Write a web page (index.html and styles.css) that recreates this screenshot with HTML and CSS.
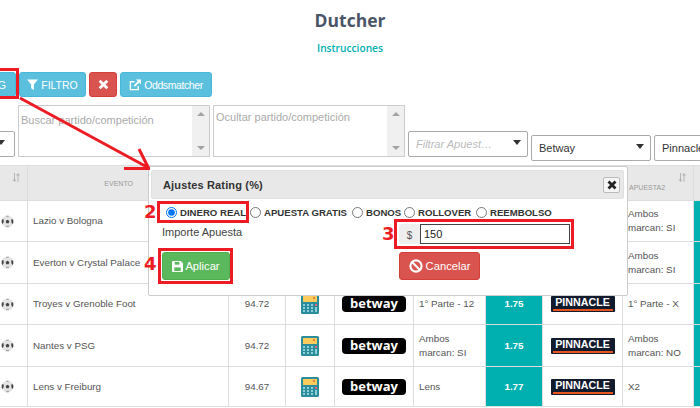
FILE: index.html
```html
<!DOCTYPE html>
<html lang="es">
<head>
<meta charset="utf-8">
<title>Dutcher</title>
<link rel="stylesheet" href="styles.css">
</head>
<body>
<svg class="sprite" aria-hidden="true">
  <symbol id="ball" viewBox="0 0 14 14">
    <circle cx="7" cy="7" r="6.500" fill="#e4e4e4"/>
    <path d="M7 5 9 6.400 8.300 9H5.700L5 6.400Z" fill="#444"/>
    <path d="M5.500 .8 8.500 .8 8 2.200H6ZM5.200 11.600 8.800 11.600 8.400 13.200H5.600Z" fill="#aaa"/>
    <path d="M.8 5 2.600 4.400 3 7 2 9.800.8 8.500ZM13.200 5 11.400 4.400 11 7 12 9.800 13.200 8.500Z" fill="#444"/>
  </symbol>
  <symbol id="calc" viewBox="0 0 18 20">
    <rect width="18" height="20" rx="1.500" fill="#2b8c9c"/>
    <rect x="2" y="2" width="14" height="6" fill="#fbcb5c"/>
    <rect x="12" y="3" width="2" height="2" fill="#e8803c"/>
    <path d="M2 10h2v2H2zM6 10h2v2H6zM10 10h2v2h-2zM2 13h2v2H2zM6 13h2v2H6zM10 13h2v2h-2zM2 16h2v2H2zM6 16h2v2H6zM10 16h2v2h-2zM14 13h2v5h-2z" fill="#8fd0d8"/>
    <rect x="14" y="10" width="2" height="2" fill="#e8607c"/>
  </symbol>
  <symbol id="sort" viewBox="0 0 8 9">
    <path d="M2 0v6.500H.4L2.500 9l2-2.500H3V0ZM5.500 9V2.500H4L6 0l2 2.500H6.500V9Z" fill="#b5b5b5"/>
  </symbol>
</svg>

<div class="stage">
  <header class="head">
    <h1 class="title">Dutcher</h1>
    <a class="link">Instrucciones</a>
  </header>

  <div class="toolbar">
    <button class="btn info btn-g">G</button>
    <button class="btn info btn-filter">
      <svg class="ic" viewBox="0 0 12 12"><path d="M0 .5h12L7.500 6v6L4.500 10V6Z" fill="#fff"/></svg>FILTRO
    </button>
    <button class="btn danger btn-x">
      <svg class="ic" viewBox="0 0 10 10"><path d="M1.500 1.500 8.500 8.500M8.500 1.500 1.500 8.500" stroke="#fff" stroke-width="2.600"/></svg>
    </button>
    <button class="btn info btn-odds">
      <svg class="ic ic-lg" viewBox="0 0 13 12"><path d="M6 2.500H1.500v8.500H10V7" fill="none" stroke="#fff" stroke-width="1.500"/><path d="M7.500 0H13v5.500L11 3.500 6.500 8 5 6.500 9.500 2Z" fill="#fff"/></svg>Oddsmatcher
    </button>
  </div>

  <div class="filters">
    <div class="select sel-cut"><span class="caret"></span></div>
    <div class="area"><span class="area-text low">Buscar partido/competición</span><span class="scroll"><i class="up"></i><i class="down"></i></span></div>
    <div class="area"><span class="area-text">Ocultar partido/competición</span><span class="scroll"><i class="up"></i><i class="down"></i></span></div>
    <div class="select sel-ph"><span class="ph">Filtrar Apuest…</span><span class="caret"></span></div>
    <div class="select sel-low"><span>Betway</span><span class="caret"></span></div>
    <div class="select sel-low sel-last"><span>Pinnacle</span></div>
  </div>

  <table class="grid">
    <colgroup>
      <col class="c0"><col class="c1"><col class="c2"><col class="c3"><col class="c4"><col class="c5"><col class="c6"><col class="c7"><col class="c8"><col class="c9">
    </colgroup>
    <thead>
      <tr>
        <th><div class="th-in"><svg class="sort"><use href="#sort"/></svg></div></th>
        <th class="th-event">EVENTO</th>
        <th></th><th></th><th></th><th></th><th></th><th></th>
        <th><div class="th-in"><svg class="sort"><use href="#sort"/></svg><span class="th-label">APUESTA2</span></div></th>
        <th></th>
      </tr>
    </thead>
    <tbody>
      <tr class="r0">
        <td class="ball"><svg><use href="#ball"/></svg></td><td class="event">Lazio v Bologna</td><td class="num">94.85</td>
        <td class="mid"><svg class="calc"><use href="#calc"/></svg></td><td class="mid"><span class="betway">betway</span></td><td class="bet">Ambos marcan: NO</td><td class="odd">1.75</td>
        <td class="mid"><span class="pinnacle">PINNACLE</span></td><td class="bet">Ambos marcan: SI</td><td class="teal"></td>
      </tr>
      <tr class="r1">
        <td class="ball"><svg><use href="#ball"/></svg></td><td class="event">Everton v Crystal Palace</td><td class="num">94.80</td>
        <td class="mid"><svg class="calc"><use href="#calc"/></svg></td><td class="mid"><span class="betway">betway</span></td><td class="bet">Ambos marcan: NO</td><td class="odd">1.75</td>
        <td class="mid"><span class="pinnacle">PINNACLE</span></td><td class="bet">Ambos marcan: SI</td><td class="teal"></td>
      </tr>
      <tr class="r2">
        <td class="ball"><svg><use href="#ball"/></svg></td><td class="event">Troyes v Grenoble Foot</td><td class="num">94.72</td>
        <td class="mid"><svg class="calc"><use href="#calc"/></svg></td><td class="mid"><span class="betway">betway</span></td><td class="bet">1° Parte - 12</td><td class="odd">1.75</td>
        <td class="mid"><span class="pinnacle">PINNACLE</span></td><td class="bet">1° Parte - X</td><td class="teal"></td>
      </tr>
      <tr class="r3">
        <td class="ball"><svg><use href="#ball"/></svg></td><td class="event">Nantes v PSG</td><td class="num">94.72</td>
        <td class="mid"><svg class="calc"><use href="#calc"/></svg></td><td class="mid"><span class="betway">betway</span></td><td class="bet">Ambos marcan: SI</td><td class="odd">1.75</td>
        <td class="mid"><span class="pinnacle">PINNACLE</span></td><td class="bet">Ambos marcan: NO</td><td class="teal"></td>
      </tr>
      <tr class="r4">
        <td class="ball"><svg><use href="#ball"/></svg></td><td class="event">Lens v Freiburg</td><td class="num">94.67</td>
        <td class="mid"><svg class="calc"><use href="#calc"/></svg></td><td class="mid"><span class="betway">betway</span></td><td class="bet">Lens</td><td class="odd">1.77</td>
        <td class="mid"><span class="pinnacle">PINNACLE</span></td><td class="bet">X2</td><td class="teal"></td>
      </tr>
    </tbody>
  </table>

  <section class="modal">
    <div class="modal-head">
      <span class="modal-title">Ajustes Rating (%)</span>
      <button class="close"><svg viewBox="0 0 10 10"><path d="M1.500 1.500 8.500 8.500M8.500 1.500 1.500 8.500" stroke="#222" stroke-width="2.800"/></svg></button>
    </div>
    <div class="modal-body">
      <div class="radios">
        <label class="radio r-a"><input type="radio" name="t" checked>DINERO REAL</label>
        <label class="radio r-b"><input type="radio" name="t">APUESTA GRATIS</label>
        <label class="radio r-c"><input type="radio" name="t">BONOS</label>
        <label class="radio r-d"><input type="radio" name="t">ROLLOVER</label>
        <label class="radio"><input type="radio" name="t">REEMBOLSO</label>
      </div>
      <div class="amount-row">
        <span class="amount-label">Importe Apuesta</span>
        <div class="input-group"><span class="addon">$</span><span class="input">150</span></div>
      </div>
      <div class="actions">
        <button class="btn success btn-apply"><svg class="ic" viewBox="0 0 12 12"><path d="M0 1a1 1 0 0 1 1-1h8.500L12 2.500V11a1 1 0 0 1-1 1H1a1 1 0 0 1-1-1Z" fill="#fff"/><rect x="3" y="1" width="5" height="3" fill="#5cb85c"/><rect x="2.500" y="7" width="7" height="4" fill="#5cb85c"/></svg>Aplicar</button>
        <button class="btn danger btn-cancel"><svg class="ic ic-xl" viewBox="0 0 12 12"><circle cx="6" cy="6" r="4.800" fill="none" stroke="#fff" stroke-width="1.800"/><path d="M2.800 2.800 9.200 9.200" stroke="#fff" stroke-width="1.800"/></svg>Cancelar</button>
      </div>
    </div>
  </section>

  <svg class="arrow" viewBox="0 0 700 408" aria-hidden="true">
    <path d="M20 98 147 167M124 168.500H150M139 149 148.500 168" fill="none" stroke="#ed1c24" stroke-width="3"/>
  </svg>
  <span class="mark mark-g"></span>
  <span class="mark mark-2"></span>
  <span class="mark mark-3"></span>
  <span class="mark mark-4"></span>
  <span class="num-mark n2">2</span>
  <span class="num-mark n3">3</span>
  <span class="num-mark n4">4</span>
</div>
</body>
</html>
```
FILE: styles.css
```css
* { box-sizing: border-box; }
html, body { margin: 0; padding: 0; overflow: hidden; background: #fff; }
.sprite { position: absolute; width: 0; height: 0; }
.stage {
  position: relative;
  width: 700px;
  height: 408px;
  overflow: hidden;
  font-family: "Liberation Sans", Arial, sans-serif;
  color: #555;
}

.head { display: flex; flex-direction: column; align-items: center; padding-top: 8px; height: 72px; }
.title { margin: 0; font: 700 17.500px/24px "Open Sans", sans-serif; color: #4a5568; }
.link { margin-top: 9px; font: 600 10.200px/14px "Open Sans", sans-serif; color: #00afb0; }

.toolbar { display: flex; gap: 3px; height: 25px; margin-left: -30px; }
.btn {
  display: inline-flex;
  align-items: center;
  justify-content: center;
  gap: 2px;
  border: 1px solid transparent;
  border-radius: 3px;
  padding: 0;
  color: #fff;
  font: 400 11px "Liberation Sans", Arial, sans-serif;
}
.info { background: #5bc0de; border-color: #46b8da; }
.danger { background: #d9534f; border-color: #d43f3a; }
.success { background: #5cb85c; border-color: #4cae4c; }
.btn-g { width: 46px; justify-content: flex-end; padding-right: 9px; }
.btn-filter { width: 67px; font-size: 10.500px; }
.btn-x { width: 28px; }
.btn-odds { width: 92px; letter-spacing: -.4px; font-size: 10.500px; }
.ic { width: 11px; height: 11px; flex: none; }
.ic-lg { width: 12px; height: 12px; }
.ic-xl { width: 14px; height: 14px; }
.btn-filter .ic, .btn-odds .ic { margin-right: 1px; }

.filters { display: flex; align-items: flex-end; gap: 3px; height: 52px; margin: 8px 0 0 -30px; }
.select {
  display: flex;
  align-items: center;
  justify-content: space-between;
  flex: none;
  width: 120px;
  height: 26px;
  padding: 0 6px 0 7px;
  border: 1px solid #aaa;
  border-radius: 2px;
  background: #fff;
  font-size: 11px;
  color: #333;
}
.sel-cut { width: 45px; padding-right: 9px; }
.sel-cut .caret { margin-left: auto; }
.sel-low { position: relative; top: 4px; }
.sel-last { width: 90px; }
.ph { font-style: italic; color: #bbb; }
.caret { width: 0; height: 0; border: 4px solid transparent; border-top: 5px solid #333; border-bottom: 0; margin-bottom: 3px; }
.area { display: flex; flex: none; width: 192px; height: 52px; border: 1px solid #ccc; background: #fff; font-size: 11px; color: #aaa; }
.area-text { flex: 1; padding: 4px 2px; white-space: nowrap; overflow: hidden; line-height: 14px; }
.area-text.low { padding-top: 7px; }
.scroll { display: flex; flex-direction: column; justify-content: space-between; align-items: center; width: 17px; padding: 6px 0; background: #f0f0f0; }
.up { border: 4px solid transparent; border-bottom: 4px solid #a3a3a3; border-top: 0; }
.down { border: 4px solid transparent; border-top: 4px solid #a3a3a3; border-bottom: 0; }

.grid { table-layout: fixed; width: 723px; margin: 8px 0 0 -10px; border-collapse: collapse; }
.c0 { width: 37px; } .c1 { width: 201px; } .c2 { width: 57px; } .c3 { width: 49px; } .c4 { width: 79px; }
.c5 { width: 72px; } .c6 { width: 57px; } .c7 { width: 80px; } .c8 { width: 71px; } .c9 { width: 20px; }
.grid th, .grid td { border: 1px solid #ddd; padding: 0; }
.grid th { height: 35px; background: #e8e8e8; font-size: 7px; font-weight: 400; color: #999; vertical-align: top; }
.th-event { padding-top: 13px !important; text-align: right; padding-right: 95px !important; line-height: 9px; }
.th-in { display: flex; flex-direction: column; align-items: flex-end; padding: 7px 7px 0 6px; height: 33px; }
.sort { width: 8px; height: 9px; }
.th-label { align-self: flex-start; margin-top: 1px; line-height: 9px; white-space: nowrap; }
tbody td { font-size: 9.800px; color: #555; line-height: 14px; height: 41px; }
.r0 td { height: 41px; } .r1 td { height: 42px; } .r2 td { height: 41px; } .r3 td { height: 42px; } .r4 td { height: 40px; }
.ball { padding-right: 13px !important; }
.ball svg { display: block; width: 13px; height: 13px; margin-left: auto; }
.event { padding-left: 5px !important; white-space: nowrap; }
.num { text-align: center; }
.mid { text-align: center; }
.calc { display: block; width: 18px; height: 20px; margin: 0 auto; }
.bet { padding-left: 5px !important; }
.odd, .teal { background: #00afb0; }
.odd { color: #fff; font-weight: 700; text-align: center; }
.betway {
  display: inline-block;
  vertical-align: middle;
  width: 64px;
  height: 16px;
  border-radius: 4px;
  background: #000;
  color: #fff;
  font: 700 13px/15px "Open Sans", sans-serif;
}
.pinnacle {
  display: inline-block;
  vertical-align: middle;
  width: 64px;
  height: 16px;
  border-radius: 1px;
  color: #fff;
  font: 700 10.700px/13px "Liberation Sans", Arial, sans-serif;
  background-color: #121a2e;
  background-image: linear-gradient(#e8551e, #e8551e);
  background-repeat: no-repeat;
  background-size: 60px 2px;
  background-position: 2px 13px;
}

.modal {
  position: absolute;
  left: 148px;
  top: 166px;
  width: 480px;
  height: 130px;
  padding: 3px 3px 0 2px;
  background: #fff;
  border: 1px solid #ccc;
  border-radius: 2px;
}
.modal-head {
  display: flex;
  align-items: center;
  justify-content: space-between;
  height: 29px;
  padding: 0 3px 0 11px;
  background: #e8e8e8;
  border: 1px solid #e0e0e0;
  border-radius: 2px;
}
.modal-title { font-size: 11px; font-weight: 700; color: #333; letter-spacing: .15px; }
.close { display: flex; align-items: center; justify-content: center; width: 17px; height: 16px; padding: 0; background: #f5f5f5; border: 1px solid #bbb; border-radius: 2px; }
.close svg { width: 10px; height: 10px; }
.modal-body { padding: 6px 0 0 11px; }
.radios { display: flex; height: 15px; padding-left: 4px; }
.radio { display: flex; align-items: center; gap: 3px; font-size: 9.600px; font-weight: 700; color: #333; white-space: nowrap; }
.radio input { width: 11px; height: 11px; margin: 0; flex: none; }
.r-a { width: 84px; }
.r-b { width: 102px; }
.r-c { width: 52px; }
.r-d { width: 72px; }
.amount-row { display: flex; align-items: flex-start; margin-top: 4px; height: 24px; }
.amount-label { width: 237px; font-size: 11px; line-height: 16px; color: #444; }
.input-group { display: flex; width: 171px; height: 20px; }
.addon { display: flex; align-items: center; justify-content: center; width: 21px; padding-top: 3px; background: #eee; font-size: 10px; color: #555; border-radius: 2px 0 0 2px; }
.input { flex: 1; border: 1px solid #444; padding-left: 3px; font-size: 11px; line-height: 18px; color: #222; background: #fff; }
.actions { display: flex; gap: 169px; margin-top: 4px; }
.btn-apply { width: 68px; height: 28px; font-size: 11.200px; }
.btn-cancel { width: 81px; height: 28px; font-size: 11.200px; gap: 3px; }

.arrow { position: absolute; left: 0; top: 0; width: 700px; height: 408px; pointer-events: none; }
.mark { position: absolute; border: 3px solid #ed1c24; }
.mark-g { left: -10px; top: 68px; width: 29px; height: 31px; }
.mark-2 { left: 157px; top: 201px; width: 92px; height: 22px; }
.mark-3 { left: 394px; top: 219px; width: 180px; height: 30px; }
.mark-4 { left: 158px; top: 248px; width: 75px; height: 36px; }
.num-mark { position: absolute; font: 700 18px/18px "DejaVu Sans", sans-serif; color: #ed1c24; }
.n2 { left: 144px; top: 203px; }
.n3 { left: 382px; top: 225px; }
.n4 { left: 144px; top: 255px; }
```
